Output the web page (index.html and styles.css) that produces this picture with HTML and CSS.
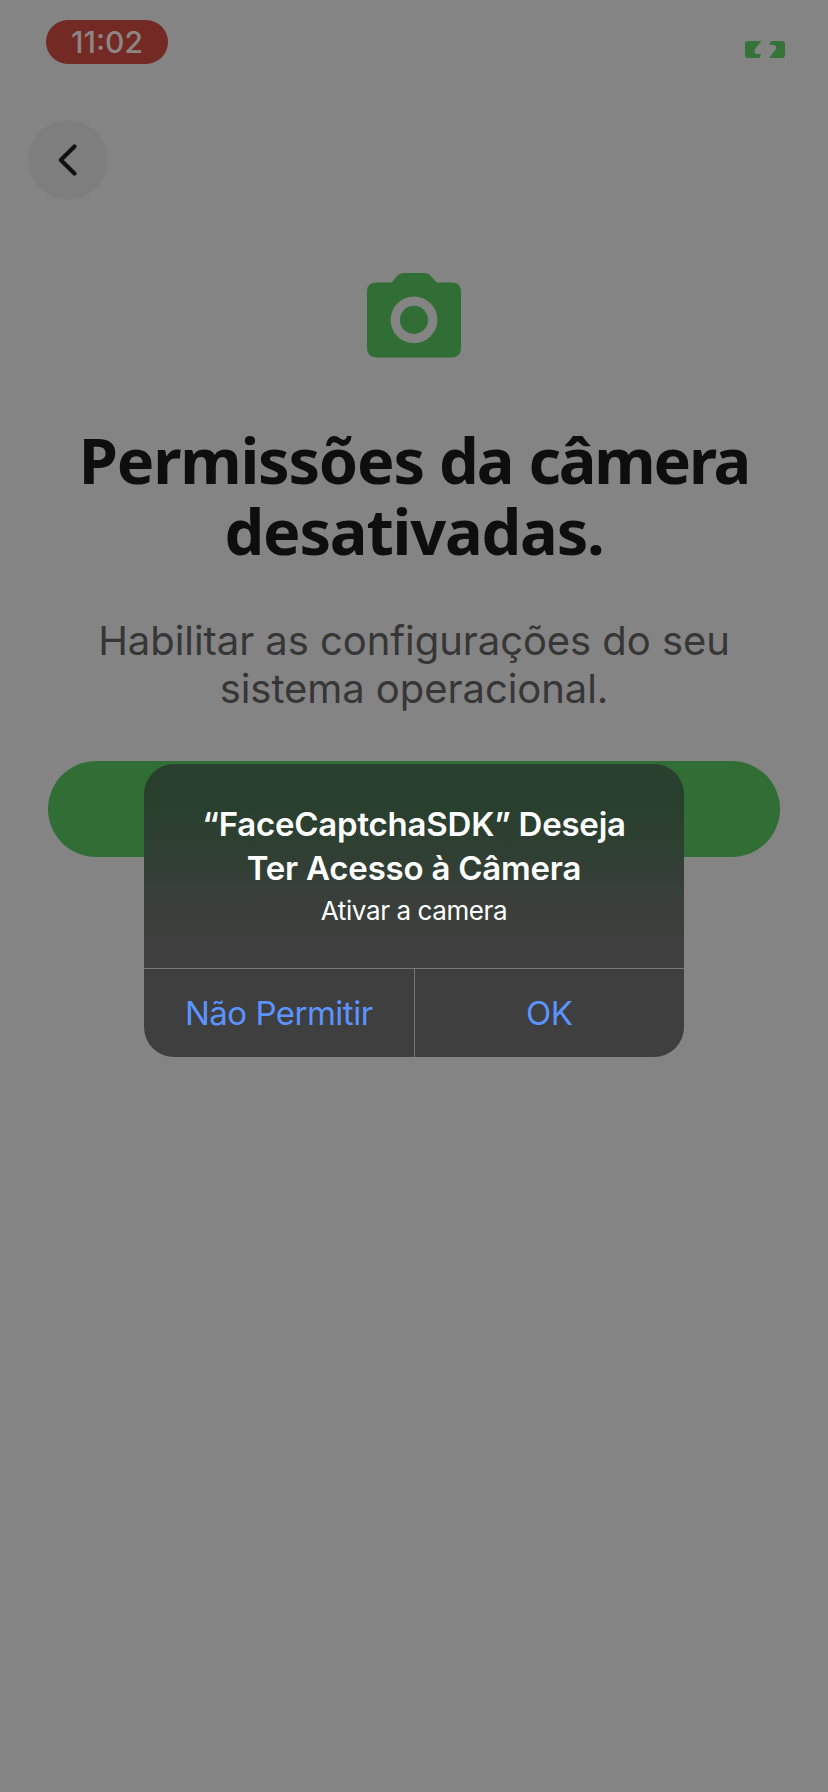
FILE: index.html
```html
<!DOCTYPE html>
<html lang="pt-BR">
<head>
<meta charset="utf-8">
<title>Permissões da câmera</title>
<link rel="stylesheet" href="styles.css">
</head>
<body>
<div class="screen">
  <header class="status">
    <div class="time">11:02</div>
    <svg class="battery" width="40" height="17" viewBox="0 0 40 17" fill="#357338">
      <path d="M3 0H16.500L10 8Q8 12.500 12.500 13H16L14.500 17H3Q0 17 0 14V3Q0 0 3 0Z"/>
      <path d="M26 0H37Q40 0 40 3V14Q40 17 37 17H24L30 9.500Q33 4.500 28 4H24.500Z"/>
    </svg>
  </header>
  <button class="back" aria-label="Voltar">
    <svg width="80" height="80" viewBox="0 0 80 80" fill="none" stroke="#111" stroke-width="4.200" stroke-linecap="round" stroke-linejoin="round"><path d="M46.500 26.500L32.800 40L46.500 53.500"/></svg>
  </button>
  <main class="content">
    <svg class="camera" width="94" height="85" viewBox="0 0 94 85">
      <path fill="#306e35" fill-rule="evenodd" d="M9.400 9.400H24.500L30 3.300Q33 0 37.500 0H56.500Q61 0 64 3.300L69.500 9.400H84.600Q94 9.400 94 18.800V75.100Q94 84.500 84.600 84.500H9.400Q0 84.500 0 75.100V18.800Q0 9.400 9.400 9.400ZM47 23.500A23.400 23.400 0 1 0 47 70.300A23.400 23.400 0 1 0 47 23.500Z"/>
      <circle cx="47" cy="46.900" r="14.100" fill="#306e35"/>
    </svg>
    <h1 class="title"><span class="line">Permissões <span class="tight">da câmera</span></span><span class="line">desativadas.</span></h1>
    <p class="description"><span class="line">Habilitar as configurações do seu</span><span class="line">sistema operacional.</span></p>
    <div class="action"></div>
  </main>
  <section class="dialog" role="alertdialog">
    <div class="message">
      <h2 class="dialog-title"><span class="line">“FaceCaptchaSDK” Deseja</span><span class="line">Ter Acesso à Câmera</span></h2>
      <p class="dialog-text">Ativar a camera</p>
    </div>
    <div class="choices">
      <button class="choice deny">Não Permitir</button>
      <button class="choice ok">OK</button>
    </div>
  </section>
</div>
</body>
</html>
```
FILE: styles.css
```css
* { box-sizing: border-box; }
body { margin: 0; background: #848484; font-family: Inter, "Liberation Sans", sans-serif; }
button { border: 0; padding: 0; font: inherit; }
svg { display: block; }
h1, h2, p { margin: 0; }
.screen { position: relative; height: 1792px; overflow: hidden; display: flex; flex-direction: column; }
.line { display: block; white-space: nowrap; }
.status { display: flex; justify-content: space-between; align-items: flex-start; padding: 20px 43px 0 46px; height: 120px; }
.time { width: 122px; height: 44px; border-radius: 22px; background: #732a24; color: #8d8685; font-size: 30px; font-weight: 500; line-height: 44px; text-align: center; }
.battery { margin-top: 21px; }
.back { width: 80px; height: 80px; margin-left: 28px; border-radius: 50%; background: #7e7e7e; flex: none; }
.content { display: flex; flex-direction: column; align-items: center; padding: 73px 48px 0; }
.title { margin-top: 66px; text-align: center; font-family: "Noto Sans", sans-serif; font-size: 63px; font-weight: 700; line-height: 71px; letter-spacing: -1.2px; color: #0e0e0e; }
.tight { letter-spacing: -2.2px; word-spacing: 2px; }
.description { margin-top: 51px; text-align: center; font-size: 40px; line-height: 48px; color: #363636; letter-spacing: -0.06px; }
.action { width: 732px; height: 96px; margin-top: 48px; border-radius: 48px; background: #306e35; }
.dialog { position: absolute; left: 144px; top: 764px; width: 540px; height: 293px; border-radius: 30px; overflow: hidden; display: flex; flex-direction: column; background: linear-gradient(#29402e 0, #29402e 40px, #303f33 90px, #393f3a 135px, #3f3f3f 185px, #3f3f3f 100%); color: #fff; text-align: center; }
.message { height: 205px; padding-top: 38px; border-bottom: 1px solid #787878; }
.dialog-title { font-size: 33px; line-height: 44px; font-weight: 600; letter-spacing: -0.22px; }
.dialog-text { margin-top: 5px; font-size: 26px; line-height: 32px; letter-spacing: -0.4px; }
.choices { flex: 1; display: flex; }
.choice { flex: 1; background: none; color: #5b93ff; font-size: 33px; letter-spacing: -0.5px; }
.deny { border-right: 1px solid #787878; }
```
